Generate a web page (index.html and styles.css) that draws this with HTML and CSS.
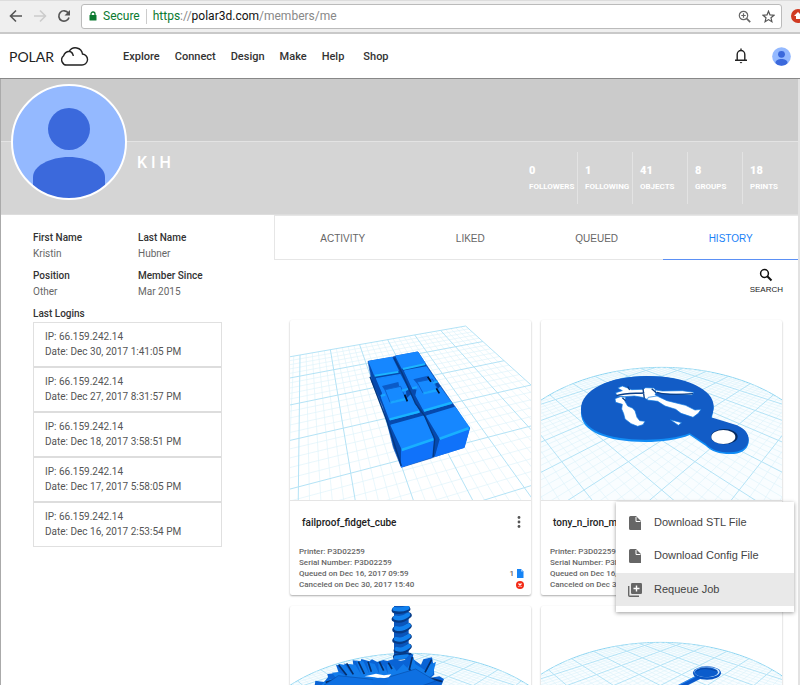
FILE: index.html
```html
<!DOCTYPE html>
<html lang="en">
<head>
<meta charset="utf-8">
<title>Polar Cloud - K I H</title>
<link rel="stylesheet" href="styles.css">
</head>
<body>
<div class="window">
  <div class="toolbar">
    <button class="tool" aria-label="Back"><svg width="14" height="14" viewBox="0 0 14 14"><path d="M13 7H2M7 1.5 1.5 7 7 12.500" fill="none" stroke="#555" stroke-width="1.6"/></svg></button>
    <button class="tool" aria-label="Forward"><svg width="14" height="14" viewBox="0 0 14 14"><path d="M1 7h11M7 1.500 12.500 7 7 12.500" fill="none" stroke="#ccc" stroke-width="1.6"/></svg></button>
    <button class="tool" aria-label="Reload"><svg width="14" height="14" viewBox="0 0 14 14"><path d="M11.300 4A5.200 5.200 0 1 0 12 8.500" fill="none" stroke="#555" stroke-width="1.700"/><path d="M13 1v5.500H7.500z" fill="#555"/></svg></button>
    <div class="address">
      <svg width="8" height="10" viewBox="0 0 8 10"><path d="M2 5V3a2 2 0 0 1 4 0v2" fill="none" stroke="#0b7a30" stroke-width="1.300"/><rect x=".5" y="4" width="7" height="5.500" rx=".5" fill="#0b7a30"/></svg>
      <span class="secure">Secure</span>
      <span class="url"><span class="scheme">https</span>://<span class="host">polar3d.com</span>/members/me</span>
      <button class="tool zoom" aria-label="Zoom"><svg width="13" height="13" viewBox="0 0 13 13" fill="none" stroke="#666" stroke-width="1.200"><circle cx="5.500" cy="5.500" r="4.200"/><path d="M3.300 5.500h4.400M5.500 3.300v4.400"/><path d="m8.700 8.700 3.500 3.500" stroke-width="1.700"/></svg></button>
      <button class="tool" aria-label="Bookmark"><svg width="13" height="13" viewBox="0 0 13 13"><path d="m6.500 1.200 1.500 3.700 4 .3-3 2.600.9 3.900-3.400-2.100-3.400 2.100.9-3.900-3-2.600 4-.3z" fill="none" stroke="#555" stroke-width="1.200"/></svg></button>
    </div>
    <button class="tool extension" aria-label="Extension"><svg width="14" height="14" viewBox="0 0 14 14"><circle cx="7" cy="7" r="7" fill="#d03a22"/><path d="M7 3 3 7h2v3h4V7h2z" fill="#fff"/></svg></button>
  </div>

  <header class="site">
    <a class="logo" href="#">POLAR
      <svg width="28" height="20" viewBox="0 0 28 20"><path d="M9 19h11.500a5.500 5.500 0 0 0 1-11A7.200 7.200 0 0 0 8.200 5.300 5.600 5.600 0 0 1 12.300 10M8.200 5.300A6.600 6.600 0 0 0 2.600 9.800 5.200 5.200 0 0 0 6.500 19H9" fill="none" stroke="#222" stroke-width="1.400"/></svg>
    </a>
    <nav>
      <a href="#">Explore</a><a href="#">Connect</a><a href="#">Design</a><a href="#">Make</a><a href="#">Help</a><a class="shop" href="#">Shop</a>
    </nav>
    <button class="tool" aria-label="Notifications"><svg width="14" height="16" viewBox="0 0 14 16"><path d="M3.200 12V6.500a3.800 4 0 0 1 7.600 0V12M1 12.300h12M7 .5v2" fill="none" stroke="#222" stroke-width="1.400"/><path d="M5.600 14h2.800L7 15.500z" fill="#222"/></svg></button>
    <button class="tool" aria-label="Account"><svg width="19" height="19" viewBox="0 0 116 116"><use href="#person"/></svg></button>
  </header>

  <main>
    <section class="cover">
      <div class="banner"></div>
      <div class="identity">
        <svg class="avatar" viewBox="0 0 116 116">
          <defs><clipPath id="round"><circle cx="58" cy="58" r="57"/></clipPath>
          <g id="person" clip-path="url(#round)"><rect width="116" height="116" fill="#94b9ff"/><circle cx="58" cy="45" r="21" fill="#3b69dc"/><path d="M22 116V93c0-11 17-20 36-20s36 9 36 20v23z" fill="#3b69dc"/></g></defs>
          <use href="#person"/><circle cx="58" cy="58" r="57" fill="none" stroke="#fff" stroke-width="2"/>
        </svg>
        <h1>K I H</h1>
        <ul class="stats">
          <li><strong>0</strong>FOLLOWERS</li>
          <li><strong>1</strong>FOLLOWING</li>
          <li><strong>41</strong>OBJECTS</li>
          <li><strong>8</strong>GROUPS</li>
          <li><strong>18</strong>PRINTS</li>
        </ul>
      </div>
    </section>

    <div class="columns">
      <aside>
        <dl>
          <div><dt>First Name</dt><dd>Kristin</dd></div>
          <div><dt>Last Name</dt><dd>Hubner</dd></div>
          <div><dt>Position</dt><dd>Other</dd></div>
          <div><dt>Member Since</dt><dd>Mar 2015</dd></div>
        </dl>
        <h2>Last Logins</h2>
        <ul class="logins">
          <li>IP: 66.159.242.14<br>Date: Dec 30, 2017 1:41:05 PM</li>
          <li>IP: 66.159.242.14<br>Date: Dec 27, 2017 8:31:57 PM</li>
          <li>IP: 66.159.242.14<br>Date: Dec 18, 2017 3:58:51 PM</li>
          <li>IP: 66.159.242.14<br>Date: Dec 17, 2017 5:58:05 PM</li>
          <li>IP: 66.159.242.14<br>Date: Dec 16, 2017 2:53:54 PM</li>
        </ul>
      </aside>

      <section class="content">
        <div class="tabs">
          <button>ACTIVITY</button><button>LIKED</button><button>QUEUED</button><button class="active">HISTORY</button>
        </div>
        <button class="search"><svg width="14" height="14" viewBox="0 0 14 14" fill="none" stroke="#111"><circle cx="5.500" cy="5.500" r="3.900" stroke-width="1.500"/><path d="m8.300 8.300 4.200 4.200" stroke-width="2"/></svg>SEARCH</button>

        <div class="cards">
          <article class="card">
            <svg class="art" viewBox="30 30 723 540">
              <g class="grid" data-scene="plane"></g>
              <g stroke-linejoin="round">
                <path d="M264 154 276 216 308 290 322 340 340 412 364 472 455 444 467 439 552 412 568 355 526 291 515 276 472 214 436 160 414 126 346 138 336 142Z" fill="#0649ad" stroke="#0b55bd" stroke-width="2"/>
                <path d="M268 155 335 143 354 182 284 194ZM349 139 412 127 434 160 367 174Z" fill="#1687ff" stroke="#1687ff" stroke-width="5"/>
                <path d="M284 194 354 183 356 188 284 200ZM368 174 433 160 437 165 370 180Z" fill="#1cb6ff"/>
                <path d="M290 206 360 194 382 236 376 243 378 270 392 256 418 306 330 329 305 263 308 249Z" fill="#1687ff" stroke="#1687ff" stroke-width="4"/>
                <path d="M374 183 439 171 470 217 455 220 470 244 480 232 515 280 433 303 408 256 412 237 398 235Z" fill="#1687ff" stroke="#1687ff" stroke-width="4"/>
                <path d="M306 228 355 216 360 240 318 246ZM400 208 444 197 452 214 414 224Z" fill="#0b5bc8"/>
                <path d="M315 239 362 229 377 266 330 277ZM411 216 457 207 474 239 429 249Z" fill="#168aff" stroke="#0c62d0" stroke-width="3"/>
                <path d="M331 278l46-11M430 250l43-10M302 258l14-4M366 242l18-5M397 235l14-4M459 219l14-5" stroke="#19a5ff" stroke-width="7" fill="none"/>
                <path d="M329 328 418 305M432 302 515 278" stroke="#18b4ff" stroke-width="7"/>
                <path d="M334 346 431 319 461 386 368 419ZM441 318 525 293 568 354 481 385Z" fill="#1687ff" stroke="#1687ff" stroke-width="5"/>
                <path d="m365 422 96-34-4 52-92 30ZM481 388l87-33-16 57-85 26Z" fill="#1072fa" stroke="#1072fa" stroke-width="4"/>
                <path d="m365 420 95-32M479 386l87-31" stroke="#19b0ff" stroke-width="8"/>
                <path d="m343 145 24 46 39 89 28 38 30 69-5 54M270 200l52 136 42 132" fill="none" stroke="#05377f" stroke-width="4"/>
                <path d="m374 254 8 20M443 200l10 15M469 235l9 15" stroke="#00132e" stroke-width="5"/>
              </g>
            </svg>
            <div class="info">
              <div class="title"><h3>failproof_fidget_cube</h3><button class="tool" aria-label="More"><svg width="4" height="12" viewBox="0 0 4 12" fill="#555"><circle cx="2" cy="1.500" r="1.400"/><circle cx="2" cy="6" r="1.400"/><circle cx="2" cy="10.500" r="1.400"/></svg></button></div>
              <p>Printer: P3D02259</p>
              <p>Serial Number: P3D02259</p>
              <p><span>Queued on Dec 16, 2017 09:59</span><span class="count">1<svg width="8" height="9" viewBox="0 0 8 9"><path d="M1 0h4l2.500 2.500V9H1z" fill="#1684f5"/><path d="M5 0v2.500h2.500" fill="#9cc8f8"/></svg></span></p>
              <p><span>Canceled on Dec 30, 2017 15:40</span><svg width="8" height="8" viewBox="0 0 8 8"><circle cx="4" cy="4" r="4" fill="#f32a16"/><path d="m2.500 2.500 3 3m0-3-3 3" stroke="#fff" stroke-width="1.200"/></svg></p>
            </div>
          </article>

          <article class="card">
            <svg class="art" viewBox="18 30 723 540">
              <g class="grid" data-scene="disc"></g>
              <path d="M138 308C138 242 222 198 336 198 452 198 536 242 536 295L530 326 594 344C628 354 644 376 641 398 636 422 616 432 586 432 552 432 530 424 512 407L464 375C430 389 382 396 330 396 216 394 138 366 138 308Z" fill="#118cf5"/>
              <path d="M138 298C138 240 222 198 336 198 452 198 536 238 536 288 536 302 533 312 528 322L594 342C628 352 642 370 641 390 638 416 616 426 586 427 552 427 530 420 512 401L464 370C430 383 382 389 330 389 216 389 138 360 138 298Z" fill="#125cc6"/>
              <ellipse cx="568" cy="380" rx="40" ry="23" fill="#052b63"/><ellipse cx="565" cy="381" rx="36" ry="21" fill="#fff"/>
              <g fill="#fff" stroke="#0e77df" stroke-width="2" stroke-linejoin="round">
                <path d="m248 234 14-6 16 6 12 5 34-1 8-5 24 1 10 10-6 10 14 8-12 8-26-2-14-6-24-4-30 2-22-2-4-10 20-6Z"/>
                <path d="m240 266 16-6 16 2-2 12 8 14 14 6 8 8 6 20 8 10 16 2-6 10-16 5-20-8-18-14-4-16-6-14 2-14-20-6Z"/>
                <path d="m362 240 20 3 60-1 34 5-4 8-40-2-50-2-22-4Z"/>
                <path d="m340 262 26-4 30 14 56 14 28 14 18-2-8 12-16 12-36-12-16-12-32-10-22-14-32-4Z"/>
                <path d="m406 329 34 9-10 8Z"/>
              </g>
              <path d="M244 257c31-10 54-6 84-8M278 230l6 10M324 236l4 30M350 236l14 12M366 247c30 9 70 7 108 4M262 263l10 9" fill="none" stroke="#0a3f88" stroke-width="4"/>
            </svg>
            <div class="info">
              <div class="title"><h3>tony_n_iron_man</h3></div>
              <p>Printer: P3D02259</p>
              <p>Serial Number: P3D02259</p>
              <p>Queued on Dec 16, 2017</p>
              <p>Canceled on Dec 30, 2017</p>
            </div>
            <div class="menu">
              <button><svg width="12" height="14" viewBox="0 0 12 14"><path d="M1 0h6l5 5v9H1.500A1.500 1.500 0 0 1 0 12.500v-11A1.500 1.500 0 0 1 1.500 0z" fill="#666"/><path d="M7 1v4.500h4.500" fill="none" stroke="#fff"/></svg>Download STL File</button>
              <button><svg width="12" height="14" viewBox="0 0 12 14"><path d="M1 0h6l5 5v9H1.500A1.500 1.500 0 0 1 0 12.500v-11A1.500 1.500 0 0 1 1.500 0z" fill="#666"/><path d="M7 1v4.500h4.500" fill="none" stroke="#fff"/></svg>Download Config File</button>
              <button class="hover"><svg width="14" height="14" viewBox="0 0 14 14"><rect x="3" width="11" height="11" rx="1.200" fill="#666"/><path d="M8.500 2.500v6M5.500 5.500h6" stroke="#fff" stroke-width="1.400"/><path d="M.7 3v9.300q0 1 1 1H11" fill="none" stroke="#666" stroke-width="1.400"/></svg>Requeue Job</button>
            </div>
          </article>

          <article class="card">
            <svg class="art" viewBox="30 333 723 540">
              <g transform="translate(8 303)"><g class="grid" data-scene="disc"></g></g>
              <path d="M342 320h44v170h-44z" fill="#0a55bb"/>
              <g fill="none" stroke-linecap="round"><path d="M344 346q20 6 38-4M344 372q20 8 42-11M346 404q20 8 40-11M346 436q20 8 40-11M350 466q20 8 36-11M348 486l40-4" stroke="#063a86" stroke-width="18"/><path d="M344 342q20 4 38-4M346 368q18 6 38-9M348 400q18 6 38-9M348 432q18 6 38-9M350 462q18 6 36-9M348 488l34-4" stroke="#1180ed" stroke-width="13"/></g>
              <path d="m104 572 2-15 26 4 12-14-2-10 34-4-8-24 28 6-4-9 28 4-2-14 24 3 2-7 24 7 8-6 16 8 18-6 12 3 20-6 20 5 12-2 12-14 14-4-2 14 25 18 7-16 26-6 5 28 2 24-11 9 26-4 14 8-8 20v110H104Z" fill="#0963d5"/>
              <path d="m132 561 20-10 22 6-18-24 20-2 22 11-24-36 22 4 20 28-12-31 22 2 18 30-16-42 22 2 18 38-8-36 24 6 14 30-4-33 18 8 12 24-4-29 20 6 10 16 20-22 12 12 18-34 6 22 34 22 8-20 20-8-10 38-38 24-65-7-57 12-60-9-70 7-20 6-38 16Z" fill="#117bea"/>
              <path d="m176 510 24 31M200 505l20 33M235 500l18 37M264 500l10 30M298 500l13 27M325 503l11 19M397 486l-9 37 15 15M455 494l-20 38M137 562l42-12M453 550l34 10" fill="none" stroke="#052d69" stroke-width="5"/>
              <path d="m130 572 45-30 112 12 20-2 100-30 60 36-40 14Z" fill="#0e70e2" stroke="#084fac" stroke-width="2"/>
              <path d="m254 544 34-8 24 5 22-3-8 9-22 4-20-4Z" fill="#fff"/>
              <ellipse cx="300" cy="560" rx="25" ry="12" fill="#0e6edf"/>
            </svg>
          </article>

          <article class="card">
            <svg class="art" viewBox="18 333 723 540">
              <g transform="translate(-4 270)"><g class="grid" data-scene="disc"></g></g>
              <path d="m425 580 70-36" stroke="#0a59cc" stroke-width="14"/><path d="m425 574 66-34" stroke="#43a5ff" stroke-width="2"/>
              <ellipse cx="516" cy="534" rx="42" ry="20" fill="#0754c4"/><ellipse cx="516" cy="531" rx="38" ry="16" fill="#c7e6ff"/><ellipse cx="514" cy="532" rx="35" ry="15" fill="#0b5ccc"/><path d="M485 528q20-15 60 0" fill="none" stroke="#063a8c" stroke-width="2"/>
            </svg>
          </article>
        </div>
      </section>
    </div>
  </main>
</div>
<script src="grid.js"></script>
</body>
</html>
```
FILE: styles.css
```css
* { box-sizing: border-box; }
body { margin: 0; font-family: Roboto, "Liberation Sans", sans-serif; font-size: 10px; line-height: 15px; color: #666; background: #fff; }
button { font: inherit; color: inherit; border: 0; padding: 0; background: none; cursor: pointer; }
a { color: inherit; text-decoration: none; }
ul, dl, dd, p, h1, h2, h3 { margin: 0; padding: 0; list-style: none; }
svg { display: block; flex: none; }
.window { height: 100vh; overflow: hidden; }

.toolbar { display: flex; align-items: center; gap: 10px; height: 34px; padding: 0 0 1px 9px; background: #efefef; border-top: 1px solid #ddd; border-bottom: 2px solid #c9c9c9; overflow: hidden; }
.tool { display: flex; flex: none; align-items: center; justify-content: center; }
.address { display: flex; flex: 1; align-items: center; height: 25px; padding: 0 6px 0 7px; margin-right: -1px; background: #fff; border: 1px solid #bbb; border-radius: 3px; font-size: 12px; }
.secure { margin-left: 6px; padding-right: 6px; border-right: 1px solid #ccc; color: #0b7a30; }
.url { flex: 1; margin-left: 6px; color: #888; }
.scheme { color: #0b7a30; }
.host { color: #111; }
.zoom { margin-right: 11px; }
.extension { margin-right: -5px; }

.site { display: flex; align-items: center; height: 45px; padding: 0 9px; border-bottom: 1px solid #888; }
.logo { display: flex; align-items: center; gap: 7px; font-family: Lato, sans-serif; font-size: 14px; color: #222; }
nav { display: flex; flex: 1; gap: 15px; margin-left: 34px; font-size: 11px; font-weight: 500; color: #333; }
.shop { margin-left: 4px; }
.site > .tool + .tool { margin-left: 24px; }

main { border-left: 1px solid #aaa; border-right: 2px solid #e2e2e2; }
.banner { height: 62px; background: #cbcbcb; }
.identity { display: flex; align-items: center; height: 74px; padding-left: 10px; background: #d5d5d5; border-top: 1px solid #e3e3e3; border-bottom: 1px solid #ddd; color: #fff; }
.avatar { width: 116px; height: 116px; margin-top: -72px; }
h1 { flex: 1; margin: -31px 0 0 10px; font-size: 16px; font-weight: 500; line-height: 20px; }
.stats { display: flex; margin-right: 1px; }
.stats li { width: 55px; height: 52px; padding: 11px 0 0 7px; font-size: 8px; font-weight: 700; line-height: 16px; }
.stats li + li { border-left: 1px solid #e3e3e3; }
.stats strong { display: block; font-size: 11px; }

.columns { display: flex; align-items: flex-start; }
aside { width: 273px; padding: 15px 52px 0 32px; }
dl { display: grid; grid-template-columns: 105px 1fr; row-gap: 7px; }
dt, h2 { font-size: 10px; font-weight: 500; line-height: 16px; color: #333; }
dd { line-height: 15px; }
h2 { margin-top: 7px; }
.logins { border: 1px solid #e0e0e0; }
.logins li { padding: 6px 11px 7px; line-height: 15px; color: #555; }
.logins li + li { border-top: 2px solid #ddd; }

.content { flex: 1; }
.tabs { display: flex; height: 45px; border: 1px solid #e6e6e6; border-right: 0; font-family: "Liberation Sans", sans-serif; }
.tabs button { flex: 1 1 auto; margin-bottom: -1px; }
.tabs .active { color: #1a82f7; box-shadow: inset 0 -1px #5b90f5; }
.search { display: flex; flex-direction: column; align-items: center; margin: 8px 15px 22px auto; font: 8px/16px "Liberation Sans", sans-serif; color: #222; }
.cards { display: grid; grid-template-columns: 1fr 1fr; gap: 11px 10px; padding: 0 16px; }
.card { position: relative; min-width: 0; background: #fff; border-radius: 2px; box-shadow: 0 1px 2px #0005; }
.art { width: 100%; }
.info { padding: 9px 7px 5px 9px; border-top: 1px solid #e5e5e5; font-size: 8px; font-weight: 500; }
.title { display: flex; align-items: center; justify-content: space-between; height: 24px; margin-bottom: 12px; padding: 0 3px; color: #222; }
h3 { font-size: 10px; font-weight: 500; }
.info p { display: flex; align-items: center; justify-content: space-between; line-height: 11px; }
.count { display: flex; align-items: center; gap: 2px; }
.menu { position: absolute; z-index: 1; top: 182px; right: -12px; display: flex; flex-direction: column; width: 178px; padding: 4px 0 6px; background: #fff; box-shadow: 0 1px 4px #0006; font-family: "Liberation Sans", sans-serif; font-size: 11px; color: #444; }
.menu button { display: flex; align-items: center; height: 33px; padding-left: 13px; }
.menu svg { margin-right: 13px; }
.menu .hover { background: #e9e9e9; margin-top: 1px; padding-left: 12px; }
.menu .hover svg { margin-right: 12px; }

.grid .minor { stroke: #def3fa; stroke-width: 2; fill: none; }
.grid .major { stroke: #b4e3f6; stroke-width: 3; fill: none; }
.grid .rim { stroke: #8cd5f2; stroke-width: 3; fill: #f9fdff; }
```
FILE: grid.js
```js
// Draws the perspective floor under each printed object.
// Each scene maps floor coordinates (u, v), one unit per major cell, to the drawing.

function plane(u, v) {
  // Square-to-quad mapping; the quad spans 6 x 3 major cells from the back right corner.
  const [p0, p1, p2, p3] = [[557, 48], [60, 135], [57, 385], [753, 225]];
  const dx1 = p1[0] - p2[0], dx2 = p3[0] - p2[0], sx = p0[0] - p1[0] + p2[0] - p3[0];
  const dy1 = p1[1] - p2[1], dy2 = p3[1] - p2[1], sy = p0[1] - p1[1] + p2[1] - p3[1];
  const det = dx1 * dy2 - dx2 * dy1;
  const g = (sx * dy2 - dx2 * sy) / det, h = (dx1 * sy - sx * dy1) / det;
  const s = u / 6, t = v / 3, w = g * s + h * t + 1;
  const x = (p1[0] - p0[0] + g * p1[0]) * s + (p3[0] - p0[0] + h * p3[0]) * t + p0[0];
  const y = (p1[1] - p0[1] + g * p1[1]) * s + (p3[1] - p0[1] + h * p3[1]) * t + p0[1];
  return [x / w, y / w];
}

function disc(x, z) {
  const w = 0.001667 + 0.000275 * z;
  return [380 + x * 0.194 / w, 1 / w - 60];
}

const line = (a, b) => `M${a.map(n => n.toFixed(1))}L${b.map(n => n.toFixed(1))}`;

function planePaths() {
  const out = { minor: '', major: '', rim: '' };
  for (let i = 0; i <= 40; i++) {
    const k = i / 5, kind = i % 5 ? 'minor' : 'major';
    out[kind] += line(plane(k, 0), plane(k, 6.5));
    if (i <= 32) out[kind] += line(plane(0, k), plane(8, k));
  }
  return out;
}

function discPaths() {
  const out = { minor: '', major: '', rim: '' };
  const cz = 3.85, r = 5.75, q = Math.SQRT1_2;
  const span = [];
  for (let a = 0; a <= 120; a++) {
    const t = a / 120 * 2 * Math.PI;
    span.push(disc(r * Math.sin(t), cz + r * Math.cos(t)).map(n => n.toFixed(1)).join());
  }
  out.rim = 'M' + span.join('L') + 'Z';
  // Diagonal lines z + x = k and z - x = k, cut at the rim.
  for (let i = -25; i <= 65; i++) {
    const k = i / 5 * 2, kind = i % 5 ? 'minor' : 'major';
    const c = (k - cz) * q;
    if (Math.abs(c) >= r) continue;
    const half = Math.sqrt(r * r - c * c);
    for (const side of [1, -1]) {
      const at = s => disc(side * (c - s) * q, cz + (c + s) * q);
      out[kind] += line(at(-half), at(half));
    }
  }
  return out;
}

document.querySelectorAll('.grid').forEach(g => {
  const paths = g.dataset.scene === 'plane' ? planePaths() : discPaths();
  g.innerHTML = ['rim', 'minor', 'major'].map(k => `<path class="${k}" d="${paths[k]}"/>`).join('');
});
```
